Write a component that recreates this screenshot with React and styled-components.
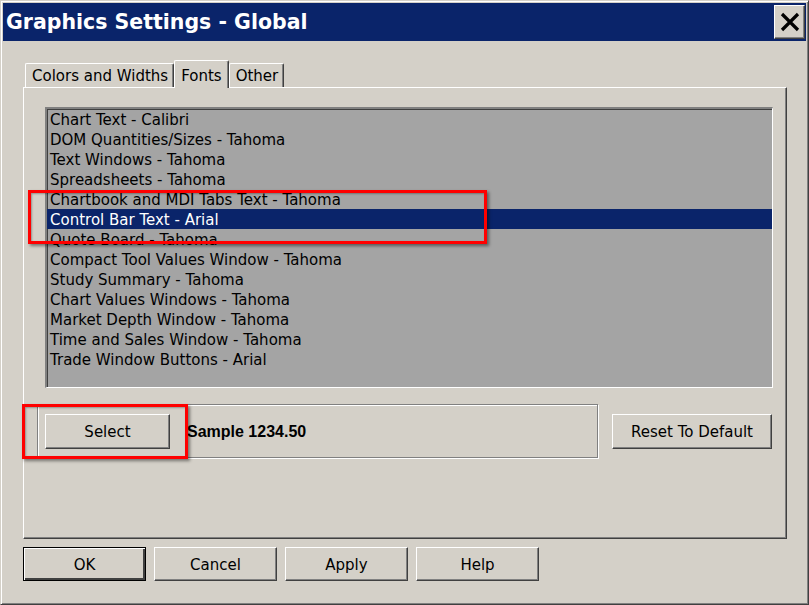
import React from 'react';
import styled, { createGlobalStyle } from 'styled-components';

const GlobalStyle = createGlobalStyle`
  html, body { margin: 0; padding: 0; background: #D4D0C8; }
  body { font-family: "DejaVu Sans", Verdana, sans-serif; }
`;

const Window = styled.div`
  position: relative;
  width: 809px;
  height: 605px;
  box-sizing: border-box;
  background: #D4D0C8;
  border-style: solid;
  border-width: 1px;
  border-color: #D4D0C8 #404040 #404040 #D4D0C8;
  box-shadow: inset 1px 1px 0 #fff, inset -1px -1px 0 #808080;
  padding: 2px;
  display: flex;
  flex-direction: column;
`;

const TitleBar = styled.div`
  height: 38px;
  background: #0A246A;
  display: flex;
  align-items: center;
  justify-content: space-between;
  padding: 0 1px 0 3px;
`;

const Title = styled.span`
  color: #fff;
  font-family: "DejaVu Sans", Verdana, sans-serif;
  font-weight: bold;
  font-size: 20.5px;
`;

const CloseButton = styled.div`
  width: 31px;
  height: 34px;
  box-sizing: border-box;
  background: #D4D0C8;
  border-style: solid;
  border-width: 1px;
  border-color: #fff #404040 #404040 #fff;
  box-shadow: inset -1px -1px 0 #808080;
  display: flex;
  align-items: center;
  justify-content: center;
`;

const Body = styled.div`
  padding: 19px 19px 0 20px;
  display: flex;
  flex-direction: column;
`;

const TabStrip = styled.div`
  display: flex;
  align-items: flex-end;
  height: 27px;
  padding-left: 2px;
  position: relative;
  z-index: 1;
`;

const Tab = styled.div`
  height: ${p => (p.$active ? '28px' : '24px')};
  margin-bottom: ${p => (p.$active ? '-1px' : '0')};
  box-sizing: border-box;
  padding: ${p => (p.$active ? '2px 6px 0 6px' : '1px 5px 0 6px')};
  background: #D4D0C8;
  border-style: solid;
  border-width: 1px 1px 0 1px;
  border-color: #fff #404040 #fff #fff;
  box-shadow: inset -1px 0 0 #808080;
  border-radius: 2px 2px 0 0;
  font-size: 15px;
  color: #000;
  display: flex;
  align-items: center;
`;

const Panel = styled.div`
  height: 452px;
  box-sizing: border-box;
  border-style: solid;
  border-width: 1px;
  border-color: #fff #404040 #404040 #fff;
  box-shadow: inset -1px -1px 0 #808080;
  padding: 19px 13px 0 13px;
  display: flex;
  flex-direction: column;
  gap: 16px;
`;

const ListBox = styled.div`
  margin-left: 8px;
  height: 281px;
  box-sizing: border-box;
  background: #A4A4A4;
  border-style: solid;
  border-width: 2px 1px 1px 2px;
  border-color: #808080 #fff #fff #808080;
  box-shadow: inset 1px 1px 0 #404040;
`;

const Item = styled.div`
  height: 20px;
  line-height: 22px;
  overflow: hidden;
  padding-left: 3px;
  font-size: 15px;
  white-space: nowrap;
  color: ${p => (p.$selected ? '#fff' : '#000')};
  background: ${p => (p.$selected ? '#0A246A' : 'transparent')};
`;

const GroupRow = styled.div`
  display: flex;
  align-items: center;
  justify-content: space-between;
  padding-right: 1px;
`;

const GroupBox = styled.div`
  width: 561px;
  height: 54px;
  box-sizing: border-box;
  border: 1px solid #808080;
  box-shadow: 1px 1px 0 #fff, inset 1px 1px 0 #fff;
  display: flex;
  align-items: center;
  padding-left: 7px;
  gap: 17px;
`;

const Button = styled.div`
  width: ${p => p.$w}px;
  height: ${p => p.$h}px;
  box-sizing: border-box;
  padding-top: 1px;
  background: #D4D0C8;
  border-style: solid;
  border-width: 1px;
  border-color: ${p => (p.$default ? '#000' : '#fff #404040 #404040 #fff')};
  box-shadow: ${p =>
    p.$default
      ? 'inset 1px 1px 0 #fff, inset -2px -2px 0 #404040'
      : 'inset -1px -1px 0 #808080'};
  font-size: 15px;
  color: #000;
  display: flex;
  align-items: center;
  justify-content: center;
`;

const Sample = styled.span`
  font-family: "Liberation Sans", Arial, sans-serif;
  font-weight: bold;
  font-size: 16px;
  padding-top: 1px;
`;

const Footer = styled.div`
  display: flex;
  gap: 8px;
  margin-top: 8px;
`;

const Highlight = styled.div`
  position: absolute;
  left: ${p => p.$x}px;
  top: ${p => p.$y}px;
  width: ${p => p.$w}px;
  height: ${p => p.$h}px;
  box-sizing: border-box;
  border: 3px solid #F00;
  box-shadow: 2px 2px 3px rgba(0, 0, 0, 0.45), inset 1px 1px 2px rgba(0, 0, 0, 0.3);
  pointer-events: none;
`;

const fonts = [
  'Chart Text - Calibri',
  'DOM Quantities/Sizes - Tahoma',
  'Text Windows - Tahoma',
  'Spreadsheets - Tahoma',
  'Chartbook and MDI Tabs Text - Tahoma',
  'Control Bar Text - Arial',
  'Quote Board - Tahoma',
  'Compact Tool Values Window - Tahoma',
  'Study Summary - Tahoma',
  'Chart Values Windows - Tahoma',
  'Market Depth Window - Tahoma',
  'Time and Sales Window - Tahoma',
  'Trade Window Buttons - Arial',
];

export default function App() {
  return (
    <>
      <GlobalStyle />
      <Window>
        <TitleBar>
          <Title>Graphics Settings - Global</Title>
          <CloseButton>
            <svg width="20" height="20" viewBox="0 0 20 20">
              <path d="M2 2 L18 18 M18 2 L2 18" stroke="#000" strokeWidth="3.2" />
            </svg>
          </CloseButton>
        </TitleBar>
        <Body>
          <TabStrip>
            <Tab>Colors and Widths</Tab>
            <Tab $active>Fonts</Tab>
            <Tab>Other</Tab>
          </TabStrip>
          <Panel>
            <ListBox>
              {fonts.map((f, i) => (
                <Item key={f} $selected={i === 5}>{f}</Item>
              ))}
            </ListBox>
            <GroupRow>
              <GroupBox>
                <Button $w={125} $h={35}>Select</Button>
                <Sample>Sample 1234.50</Sample>
              </GroupBox>
              <Button $w={160} $h={35}>Reset To Default</Button>
            </GroupRow>
          </Panel>
          <Footer>
            <Button $w={123} $h={34} $default>OK</Button>
            <Button $w={123} $h={34}>Cancel</Button>
            <Button $w={123} $h={34}>Apply</Button>
            <Button $w={123} $h={34}>Help</Button>
          </Footer>
        </Body>
        <Highlight $x={27} $y={189} $w={459} $h={54} />
        <Highlight $x={21} $y={403} $w={166} $h={55} />
      </Window>
    </>
  );
}
